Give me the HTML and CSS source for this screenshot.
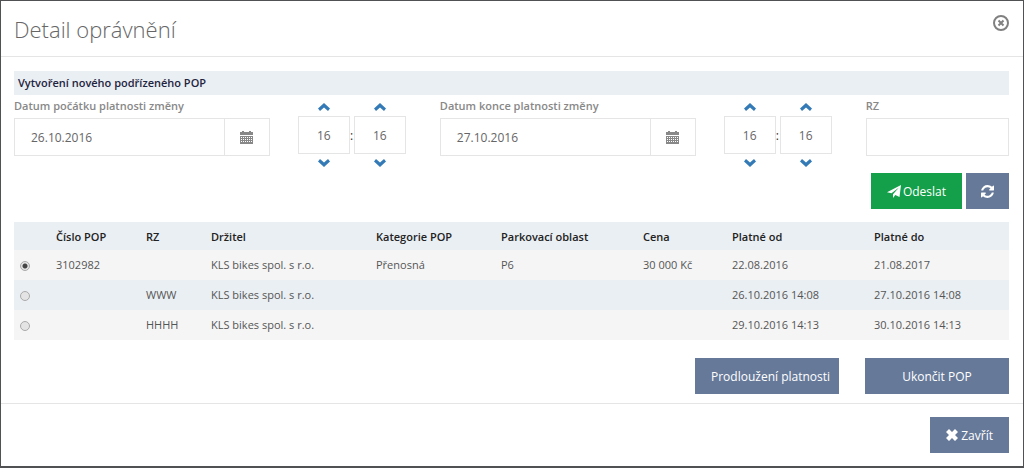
FILE: index.html
```html
<!DOCTYPE html>
<html lang="cs">
<head>
<meta charset="utf-8">
<meta name="viewport" content="width=device-width, initial-scale=1">
<title>Detail oprávnění</title>
<link rel="stylesheet" href="styles.css">
</head>
<body>
<svg class="sprite" aria-hidden="true">
  <symbol id="calendar" viewBox="0 0 13 13"><path fill="currentColor" fill-rule="evenodd" d="M2 0h2v1h5V0h2v1h2v3H0V1h2zM0 5h13v8H0zM1 6v1h1V6zm2 0v1h1V6zm2 0v1h1V6zm2 0v1h1V6zm2 0v1h1V6zm2 0v1h1V6zM1 8v1h1V8zm2 0v1h1V8zm2 0v1h1V8zm2 0v1h1V8zm2 0v1h1V8zm2 0v1h1V8zM1 10v1h1v-1zm2 0v1h1v-1zm2 0v1h1v-1zm2 0v1h1v-1zm2 0v1h1v-1zm2 0v1h1v-1z"/></symbol>
  <symbol id="up" viewBox="0 0 12 8"><path fill="currentColor" d="M6 0l6 5.600L10 8 6 4.400 2 8 0 5.600z"/></symbol>
  <symbol id="down" viewBox="0 0 12 8"><path fill="currentColor" d="M6 8L0 2.400 2 0l4 3.600L10 0l2 2.400z"/></symbol>
  <symbol id="send" viewBox="0 0 14 13"><path fill="currentColor" d="M14 0L12.500 12 8.300 9.900 6 13V9.200L12 2.500 4.500 8.300 0 7.200z"/></symbol>
  <symbol id="refresh" viewBox="0 0 1536 1536"><path fill="currentColor" d="M1511 928q0 5-1 7-64 268-268 434.500T764 1536q-146 0-282.500-55T238 1324l-129 129q-19 19-45 19t-45-19-19-45V960q0-26 19-45t45-19h448q26 0 45 19t19 45-19 45l-137 137q71 66 161 102t187 36q134 0 250-65t186-179q11-17 53-117 8-23 30-23h192q13 0 22.500 9.500t9.500 22.500zm25-800v448q0 26-19 45t-45 19h-448q-26 0-45-19t-19-45 19-45l138-138Q969 256 768 256q-134 0-250 65T332 500q-11 17-53 117-8 23-30 23H50q-13 0-22.500-9.500T18 608v-7q65-268 270-434.500T768 0q146 0 284 55.500T1297 212l130-129q19-19 45-19t45 19 19 45z"/></symbol>
  <symbol id="times" viewBox="0 0 12 12"><path fill="currentColor" d="M3 0l3 3 3-3 3 3-3 3 3 3-3 3-3-3-3 3-3-3 3-3-3-3z"/></symbol>
  <symbol id="close" viewBox="0 0 16 16"><g fill="none" stroke="currentColor" stroke-width="2"><circle cx="8" cy="8" r="7"/><path d="M5.500 5.500l5 5m0-5l-5 5"/></g></symbol>
</svg>
<main class="dialog">
  <header class="dialog-header">
    <h1>Detail oprávnění</h1>
    <button class="close" type="button" aria-label="Zavřít dialog"><svg><use href="#close"/></svg></button>
  </header>
  <form class="dialog-body">
    <h2>Vytvoření nového podřízeného POP</h2>
    <div class="fields">
      <div class="field">
        <label for="from">Datum počátku platnosti změny</label>
        <div class="date"><input id="from" type="text" value="26.10.2016"><button type="button" aria-label="Kalendář"><svg><use href="#calendar"/></svg></button></div>
      </div>
      <div class="time">
        <div class="spinner"><button type="button" aria-label="Více hodin"><svg><use href="#up"/></svg></button><input type="text" value="16" aria-label="Hodiny od"><button type="button" aria-label="Méně hodin"><svg><use href="#down"/></svg></button></div>
        <span class="colon">:</span>
        <div class="spinner"><button type="button" aria-label="Více minut"><svg><use href="#up"/></svg></button><input type="text" value="16" aria-label="Minuty od"><button type="button" aria-label="Méně minut"><svg><use href="#down"/></svg></button></div>
      </div>
      <div class="field">
        <label for="to">Datum konce platnosti změny</label>
        <div class="date"><input id="to" type="text" value="27.10.2016"><button type="button" aria-label="Kalendář"><svg><use href="#calendar"/></svg></button></div>
      </div>
      <div class="time">
        <div class="spinner"><button type="button" aria-label="Více hodin"><svg><use href="#up"/></svg></button><input type="text" value="16" aria-label="Hodiny do"><button type="button" aria-label="Méně hodin"><svg><use href="#down"/></svg></button></div>
        <span class="colon">:</span>
        <div class="spinner"><button type="button" aria-label="Více minut"><svg><use href="#up"/></svg></button><input type="text" value="16" aria-label="Minuty do"><button type="button" aria-label="Méně minut"><svg><use href="#down"/></svg></button></div>
      </div>
      <div class="field">
        <label for="rz">RZ</label>
        <input id="rz" type="text">
      </div>
    </div>
    <div class="actions">
      <button class="btn btn-send" type="submit"><svg class="icon-send"><use href="#send"/></svg>Odeslat</button>
      <button class="btn" type="button" aria-label="Obnovit"><svg class="icon-refresh"><use href="#refresh"/></svg></button>
    </div>
    <table>
      <colgroup><col class="c-pick"><col class="c-number"><col class="c-rz"><col class="c-holder"><col class="c-category"><col class="c-area"><col class="c-price"><col class="c-from"><col></colgroup>
      <thead><tr><th></th><th>Číslo POP</th><th>RZ</th><th>Držitel</th><th>Kategorie POP</th><th>Parkovací oblast</th><th>Cena</th><th>Platné od</th><th>Platné do</th></tr></thead>
      <tbody>
        <tr><td><input type="radio" name="pop" aria-label="POP 3102982" checked></td><td>3102982</td><td></td><td>KLS bikes spol. s r.o.</td><td>Přenosná</td><td>P6</td><td>30 000 Kč</td><td>22.08.2016</td><td>21.08.2017</td></tr>
        <tr><td><input type="radio" name="pop" aria-label="WWW"></td><td></td><td>WWW</td><td>KLS bikes spol. s r.o.</td><td></td><td></td><td></td><td>26.10.2016 14:08</td><td>27.10.2016 14:08</td></tr>
        <tr><td><input type="radio" name="pop" aria-label="HHHH"></td><td></td><td>HHHH</td><td>KLS bikes spol. s r.o.</td><td></td><td></td><td></td><td>29.10.2016 14:13</td><td>30.10.2016 14:13</td></tr>
      </tbody>
    </table>
    <div class="row-actions">
      <button class="btn btn-extend" type="button">Prodloužení platnosti</button>
      <button class="btn" type="button">Ukončit POP</button>
    </div>
  </form>
  <footer class="dialog-footer">
    <button class="btn" type="button"><svg class="icon-times"><use href="#times"/></svg>Zavřít</button>
  </footer>
</main>
</body>
</html>
```

FILE: styles.css
```css
* { box-sizing: border-box; }
body { margin: 0; background: #444; font-family: "Open Sans", "Noto Sans", sans-serif; font-size: 11px; color: #555; }
button, input { font: inherit; color: inherit; margin: 0; border-radius: 0; }
button { padding: 0; border: 0; background: none; cursor: pointer; }
svg { display: block; }
.sprite { position: absolute; width: 0; height: 0; }

.dialog { min-height: 100vh; border: 1px solid #505153; border-bottom-width: 2px; background: #fff; }
.dialog-header { display: flex; justify-content: space-between; align-items: flex-start; height: 56px; padding: 14px 14px 14px 13px; border-bottom: 1px solid #e5e5e5; }
h1 { margin: 0; font-size: 22px; line-height: 28px; font-weight: 300; color: #666; }
.close { color: #808080; }
.close svg { width: 16px; height: 16px; }

.dialog-body { padding: 14px 0 9px; }
h2 { margin: 0 14px 0 13px; padding: 0 4px; background: #eaeff3; color: #1f2440; font-size: 11px; line-height: 24px; font-weight: 600; }
.fields { display: grid; grid-template-columns: 20fr 10fr 20fr 10fr 12fr; padding-top: 3px; }
.field { padding: 0 14px 0 13px; }
.field label { display: block; height: 20px; line-height: 16px; font-weight: 600; color: #888; white-space: nowrap; }
.field input { display: block; width: 100%; height: 38px; padding: 0 16px; border: 1px solid #e5e5e5; background: #fff; font-size: 12px; color: #666; }
.date { display: flex; margin-right: 1px; }
.field .date input { flex: 1; min-width: 0; padding-right: 0; }
.date button { display: flex; align-items: center; justify-content: center; width: 45px; border: 1px solid #e5e5e5; border-left: 0; color: #888; }
.date svg { width: 13px; height: 13px; }
.time { display: flex; align-items: center; align-self: start; padding-left: 13px; }
.spinner { display: flex; flex-direction: column; align-items: center; width: 52px; }
.spinner button { display: flex; align-items: center; justify-content: center; width: 100%; height: 18px; color: #337ab7; }
.spinner svg { width: 12px; height: 8px; }
.spinner input { width: 100%; height: 38px; padding: 0; border: 1px solid #e5e5e5; background: #fff; text-align: center; font-size: 12px; color: #666; }
.colon { width: 4px; font-size: 12px; color: #333; }

.btn { display: inline-flex; align-items: center; justify-content: center; gap: 2px; height: 36px; padding: 0 16px; background: #667999; color: #fff; font-size: 12px; white-space: nowrap; }
.btn-send { background: #14a04a; }
.actions { display: flex; justify-content: flex-end; gap: 4px; padding: 1px 14px 13px; }
.actions .btn { padding: 0 15px; }
.actions .btn-send { padding: 0 16px; }
.icon-send { width: 14px; height: 13px; }
.icon-refresh { width: 13px; height: 13px; }
.icon-times { width: 12px; height: 12px; margin-right: 1px; }

table { width: calc(100% - 27px); margin: 0 14px 18px 13px; border-collapse: collapse; table-layout: fixed; }
th, td { height: 30px; padding: 0 5px 1px; text-align: left; white-space: nowrap; }
thead tr { background: #eaeff3; }
th { height: 28px; padding-bottom: 0; color: #222; font-weight: 600; }
tbody tr { background: #f5f5f5; }
tbody tr:nth-child(even) { background: #eaeff3; }
td input { appearance: none; display: block; width: 10px; height: 10px; margin: 2px 0 0 1px; border: 1px solid #aaa; border-radius: 50%; background: #e4e4e4; }
td input:checked { background: radial-gradient(circle, #444 0 2px, #e4e4e4 3px); }
.c-pick { width: 37px; }
.c-number { width: 90px; }
.c-rz { width: 65px; }
.c-holder { width: 165px; }
.c-category { width: 125px; }
.c-area { width: 142px; }
.c-price { width: 89px; }
.c-from { width: 142px; }

.row-actions { display: flex; justify-content: flex-end; gap: 26px; padding: 0 14px; }
.row-actions .btn { width: 144px; }
.row-actions .btn-extend { justify-content: flex-start; }
.dialog-footer { display: flex; justify-content: flex-end; padding: 13px 14px; border-top: 1px solid #e5e5e5; }
```
